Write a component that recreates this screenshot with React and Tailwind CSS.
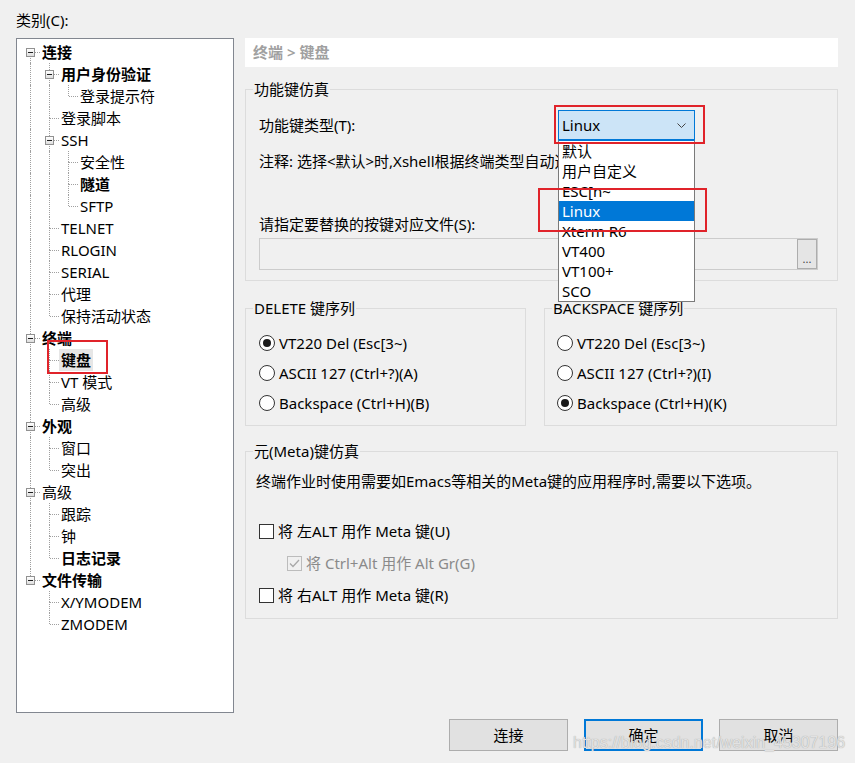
import React from 'react';

const tree = [
  {
    label: '连接', bold: true, children: [
      { label: '用户身份验证', bold: true, children: [{ label: '登录提示符' }] },
      { label: '登录脚本' },
      { label: 'SSH', children: [{ label: '安全性' }, { label: '隧道', bold: true }, { label: 'SFTP' }] },
      { label: 'TELNET' },
      { label: 'RLOGIN' },
      { label: 'SERIAL' },
      { label: '代理' },
      { label: '保持活动状态' },
    ],
  },
  {
    label: '终端', bold: true, children: [
      { label: '键盘', bold: true, selected: true },
      { label: 'VT 模式' },
      { label: '高级' },
    ],
  },
  { label: '外观', bold: true, children: [{ label: '窗口' }, { label: '突出' }] },
  { label: '高级', children: [{ label: '跟踪' }, { label: '钟' }, { label: '日志记录', bold: true }] },
  { label: '文件传输', bold: true, children: [{ label: 'X/YMODEM' }, { label: 'ZMODEM' }] },
];

const flatten = (nodes, level = 0, guides = [], out = []) => {
  nodes.forEach((node, i) => {
    const isFirst = level === 0 && i === 0;
    const isLast = i === nodes.length - 1;
    out.push({ ...node, level, guides, isFirst, isLast });
    if (node.children) flatten(node.children, level + 1, [...guides, !isLast], out);
  });
  return out;
};

const rows = flatten(tree);

const TreeRow = ({ row }) => (
  <div className="flex h-[22px] items-center">
    {row.guides.map((cont, g) => (
      <div key={g} className="relative h-full w-[19px] shrink-0">
        {cont && <div className="absolute left-[9px] top-0 h-full border-l border-dotted border-[#a0a0a0]" />}
      </div>
    ))}
    <div className="relative h-full w-[19px] shrink-0">
      {!row.isFirst && <div className="absolute left-[9px] top-0 h-[11px] border-l border-dotted border-[#a0a0a0]" />}
      {!row.isLast && <div className="absolute left-[9px] top-[11px] h-[11px] border-l border-dotted border-[#a0a0a0]" />}
      {row.children ? (
        <>
          <div className="absolute left-[14px] top-[11px] w-[5px] border-t border-dotted border-[#a0a0a0]" />
          <div className="absolute left-[5px] top-[7px] flex h-[9px] w-[9px] items-center justify-center border border-[#919191] bg-linear-to-b from-white to-[#dedede]">
            <div className="h-px w-[5px] bg-[#1e1e1e]" />
          </div>
        </>
      ) : (
        <div className="absolute left-[10px] top-[11px] w-[9px] border-t border-dotted border-[#a0a0a0]" />
      )}
    </div>
    <span
      className={`px-[2px] leading-[22px] whitespace-nowrap ${row.bold ? 'font-bold' : ''} ${
        row.selected ? 'bg-[#e6e6e6]' : ''
      }`}
    >
      {row.label}
    </span>
  </div>
);

const Group = ({ title, className = '', children }) => (
  <div className={`relative border border-[#dcdcdc] ${className}`}>
    <span className="absolute left-[7px] top-[-11px] bg-[#f0f0f0] px-px leading-[20px] whitespace-nowrap">{title}</span>
    {children}
  </div>
);

const Radio = ({ checked, label }) => (
  <div className="flex h-[30px] items-center">
    <span className="flex h-[16px] w-[16px] items-center justify-center rounded-full border border-[#333333] bg-white">
      {checked && <span className="h-[8px] w-[8px] rounded-full bg-[#1a1a1a]" />}
    </span>
    <span className="ml-[4px] whitespace-nowrap">{label}</span>
  </div>
);

const Checkbox = ({ label, checked, disabled, className = '' }) => (
  <div className={`flex h-[32px] items-center ${className}`}>
    <span
      className={`flex h-[15px] w-[15px] items-center justify-center border ${
        disabled ? 'border-[#bcbcbc] bg-[#f0f0f0]' : 'border-[#333333] bg-white'
      }`}
    >
      {checked && (
        <svg width="11" height="9" viewBox="0 0 11 9">
          <polyline points="1,4.5 4,7.5 10,1" fill="none" stroke={disabled ? '#a8a8a8' : '#222'} strokeWidth="1.3" />
        </svg>
      )}
    </span>
    <span className={`ml-[4px] whitespace-nowrap ${disabled ? 'text-[#8a8a8a]' : ''}`}>{label}</span>
  </div>
);

const options = ['默认', '用户自定义', 'ESC[n~', 'Linux', 'Xterm R6', 'VT400', 'VT100+', 'SCO'];

export default function App() {
  return (
    <div className="relative h-[763px] w-[855px] overflow-hidden bg-[#f0f0f0] font-['Noto_Sans','Noto_Sans_CJK_SC',sans-serif] text-[15px] text-black">
      <div className="flex gap-[11px] pl-[16px]">
        {/* Category tree */}
        <div className="w-[218px] shrink-0">
          <div className="mt-[10px] h-[20px] leading-[20px]">类别(C):</div>
          <div className="mt-[8px] h-[675px] border border-[#828790] bg-white pl-[4px] pt-[2px]">
            {rows.map((row, i) => (
              <TreeRow key={i} row={row} />
            ))}
          </div>
        </div>

        {/* Settings */}
        <div className="w-[593px] shrink-0 pt-[38px]">
          <div className="h-[29px] bg-white pl-[8px] font-semibold leading-[29px] text-[#a0a0a0]">终端 &gt; 键盘</div>

          <Group title="功能键仿真" className="mt-[22px] pb-[10px] pl-[13px] pt-[20px]">
            <div className="flex h-[30px] items-center">
              <span className="w-[299px] shrink-0">功能键类型(T):</span>
              <div className="flex h-[30px] w-[137px] items-center justify-between border border-[#0078d7] bg-[#cce4f7] pl-[3px] pr-[8px]">
                <span>Linux</span>
                <svg width="9" height="5" viewBox="0 0 9 5">
                  <polyline points="0.5,0.5 4.5,4.5 8.5,0.5" fill="none" stroke="#444" strokeWidth="1" />
                </svg>
              </div>
            </div>
            <div className="mt-[11px] h-[20px] w-[299px] overflow-hidden whitespace-nowrap leading-[20px]">
              注释: 选择&lt;默认&gt;时,Xshell根据终端类型自动选择功能键类型。
            </div>
            <div className="mt-[43px] h-[20px] leading-[20px]">请指定要替换的按键对应文件(S):</div>
            <div className="mt-[4px] flex h-[32px] w-[559px] justify-end border border-[#cccccc] bg-[#f0f0f0]">
              <div className="flex h-[30px] w-[20px] items-end justify-center border border-[#adadad] bg-[#e5e5e5] pb-[4px] text-[11px] leading-[11px] text-[#444]">
                ...
              </div>
            </div>
          </Group>

          <div className="mt-[27px] flex gap-[18px]">
            <Group title="DELETE 键序列" className="w-[281px] pb-[7px] pl-[13px] pt-[19px]">
              <Radio checked label="VT220 Del (Esc[3~)" />
              <Radio label="ASCII 127 (Ctrl+?)(A)" />
              <Radio label="Backspace (Ctrl+H)(B)" />
            </Group>
            <Group title="BACKSPACE 键序列" className="w-[293px] pb-[7px] pl-[12px] pt-[19px]">
              <Radio label="VT220 Del (Esc[3~)" />
              <Radio label="ASCII 127 (Ctrl+?)(I)" />
              <Radio checked label="Backspace (Ctrl+H)(K)" />
            </Group>
          </div>

          <Group title="元(Meta)键仿真" className="mt-[25px] pb-[7px] pl-[10px] pt-[19px]">
            <div className="h-[20px] whitespace-nowrap leading-[20px]">
              终端作业时使用需要如Emacs等相关的Meta键的应用程序时,需要以下选项。
            </div>
            <div className="mt-[24px]">
              <Checkbox className="ml-[3px]" label="将 左ALT 用作 Meta 键(U)" />
              <Checkbox className="ml-[31px]" checked disabled label="将 Ctrl+Alt 用作 Alt Gr(G)" />
              <Checkbox className="ml-[3px]" label="将 右ALT 用作 Meta 键(R)" />
            </div>
          </Group>

          <div className="mt-[100px] flex justify-end gap-[16px]">
            <button className="h-[32px] w-[119px] border border-[#adadad] bg-[#e1e1e1]">连接</button>
            <button className="h-[32px] w-[119px] border-2 border-[#0078d7] bg-[#e1e1e1]">确定</button>
            <button className="h-[32px] w-[119px] border border-[#adadad] bg-[#e1e1e1]">取消</button>
          </div>
        </div>
      </div>

      {/* Open dropdown list */}
      <div className="absolute left-[558px] top-[140px] w-[137px] border border-[#7a7a7a] border-t-[#0078d7] bg-white">
        {options.map((opt) => (
          <div
            key={opt}
            className={`h-[20px] whitespace-nowrap pl-[3px] leading-[20px] ${
              opt === 'Linux' ? 'bg-[#0078d7] text-white' : ''
            }`}
          >
            {opt}
          </div>
        ))}
      </div>

      {/* Red annotation boxes */}
      <div className="absolute left-[554px] top-[105px] h-[39px] w-[151px] border-2 border-[#e0232a]" />
      <div className="absolute left-[538px] top-[188px] h-[44px] w-[169px] border-2 border-[#e0232a]" />
      <div className="absolute left-[47px] top-[340px] h-[34px] w-[61px] border-2 border-[#e0232a]" />

      {/* Watermark */}
      <div className="absolute left-[573px] top-[734px] font-['Liberation_Sans',sans-serif] text-[16px] leading-[18px] text-[#e2e2e2] [text-shadow:0_0_1px_#9a9a9a]">
        https://blog.csdn.net/weixin_45307196
      </div>
    </div>
  );
}
